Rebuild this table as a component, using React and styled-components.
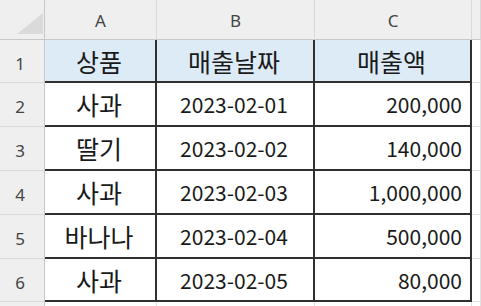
import React from 'react';
import styled, { createGlobalStyle } from 'styled-components';

const GlobalStyle = createGlobalStyle`
  html, body {
    margin: 0;
    padding: 0;
    background: #ffffff;
  }
  body {
    font-family: "Noto Sans CJK KR", "Noto Sans", sans-serif;
  }
`;

const columns = ['A', 'B', 'C'];

const rows = [
  ['상품', '매출날짜', '매출액'],
  ['사과', '2023-02-01', '200,000'],
  ['딸기', '2023-02-02', '140,000'],
  ['사과', '2023-02-03', '1,000,000'],
  ['바나나', '2023-02-04', '500,000'],
  ['사과', '2023-02-05', '80,000'],
];

// korean text is drawn larger than digits in the original (Malgun Gothic)
const isKorean = (s) => /[\uac00-\ud7a3]/.test(s);

const Sheet = () => {
  return (
    <Grid>
      <Corner>
        <svg width="26" height="21" viewBox="0 0 26 21">
          <polygon points="26,0 26,21 0,21" fill="#dadada" />
        </svg>
      </Corner>
      {columns.map((c) => (
        <ColHeader key={c}>{c}</ColHeader>
      ))}
      <ColHeader />

      {rows.map((r, i) => (
        <React.Fragment key={i}>
          <RowHeader>{i + 1}</RowHeader>
          {r.map((v, j) => (
            <Cell
              key={j}
              head={i === 0}
              kr={isKorean(v)}
              align={i > 0 && j === 2 ? 'right' : 'center'}
            >
              {v}
            </Cell>
          ))}
          <Blank />
        </React.Fragment>
      ))}

      <RowHeader />
      <Blank />
      <Blank />
      <Blank />
      <Blank />
    </Grid>
  );
};

export default function App() {
  return (
    <>
      <GlobalStyle />
      <Sheet />
    </>
  );
}

const Grid = styled.div`
  display: grid;
  width: 481px;
  height: 306px;
  overflow: hidden;
  grid-template-columns: 45px 112px 158px 157px 1fr;
  grid-template-rows: 40px 43px 44px 44px 44px 44px 43px 1fr;
  background: #ffffff;
`;

const Corner = styled.div`
  box-sizing: border-box;
  background: #efefef;
  border-right: 1px solid #c8c8c8;
  border-bottom: 1px solid #c8c8c8;
  display: flex;
  align-items: flex-end;
  justify-content: flex-end;
  padding: 0 1px 5px 0;
`;

const ColHeader = styled.div`
  box-sizing: border-box;
  background: #efefef;
  border-right: 1px solid #d9d9d9;
  border-bottom: 1px solid #c8c8c8;
  display: flex;
  align-items: center;
  justify-content: center;
  font-family: "Noto Sans", "Noto Sans CJK KR", sans-serif;
  font-size: 17px;
  color: #444444;
  padding-top: 1px;
`;

const RowHeader = styled.div`
  box-sizing: border-box;
  background: #efefef;
  border-right: 1px solid #c8c8c8;
  border-bottom: 1px solid #d9d9d9;
  display: flex;
  align-items: center;
  justify-content: center;
  font-family: "Noto Sans", "Noto Sans CJK KR", sans-serif;
  font-size: 17px;
  color: #444444;
  padding: 4px 4px 0 0;
`;

const Cell = styled.div`
  box-sizing: border-box;
  background: ${(p) => (p.head ? '#ddebf7' : '#ffffff')};
  border-right: 2px solid #303030;
  border-bottom: 2px solid #303030;
  display: flex;
  align-items: center;
  justify-content: ${(p) => (p.align === 'right' ? 'flex-end' : 'center')};
  padding: 0 ${(p) => (p.align === 'right' ? '8px' : '2px')} 0 0;
  font-size: ${(p) => (p.kr ? '25px' : '21px')};
  color: #1a1a1a;
  white-space: nowrap;
`;

const Blank = styled.div`
  box-sizing: border-box;
  border-right: 1px solid #e1e1e1;
  border-bottom: 1px solid #e1e1e1;
`;
